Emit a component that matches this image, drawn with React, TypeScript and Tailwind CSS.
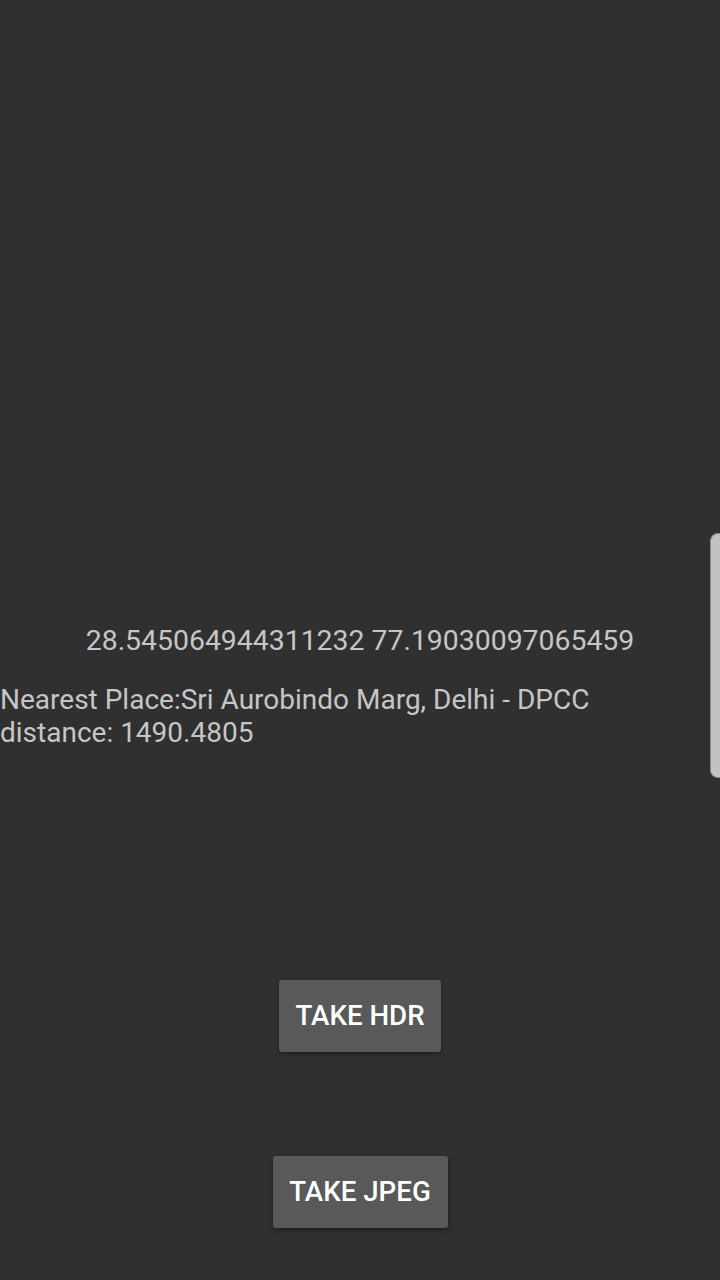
export default function App() {
  return (
    <div
      className="relative w-[720px] h-[1280px] bg-[#303030] overflow-hidden flex flex-col"
      style={{ fontFamily: 'Roboto, "Noto Sans", sans-serif' }}
    >
      <div className="h-[624px]" />
      <div className="text-center text-[28.4px] leading-[33px] text-[#c6c6c6]">
        28.545064944311232 77.19030097065459
      </div>
      <div className="mt-[26px] text-[28px] leading-[33px] text-[#c6c6c6]">
        <div>Nearest Place:Sri Aurobindo Marg, Delhi - DPCC</div>
        <div>distance: 1490.4805</div>
      </div>
      <div className="mt-[231px] flex justify-center">
        <button className="w-[162px] h-[72px] rounded-[3px] bg-[#595959] text-white text-[27.7px] font-medium shadow-[0_2px_4px_rgba(0,0,0,0.4)]">
          TAKE HDR
        </button>
      </div>
      <div className="mt-[104px] flex justify-center">
        <button className="w-[175px] h-[72px] rounded-[3px] bg-[#595959] text-white text-[27.7px] font-medium shadow-[0_2px_4px_rgba(0,0,0,0.4)]">
          TAKE JPEG
        </button>
      </div>
      <div className="absolute right-0 top-[533px] w-[10px] h-[245px] bg-[#c2c2c2] rounded-l-[8px] border border-r-0 border-[#8a8a8a]" />
    </div>
  );
}
